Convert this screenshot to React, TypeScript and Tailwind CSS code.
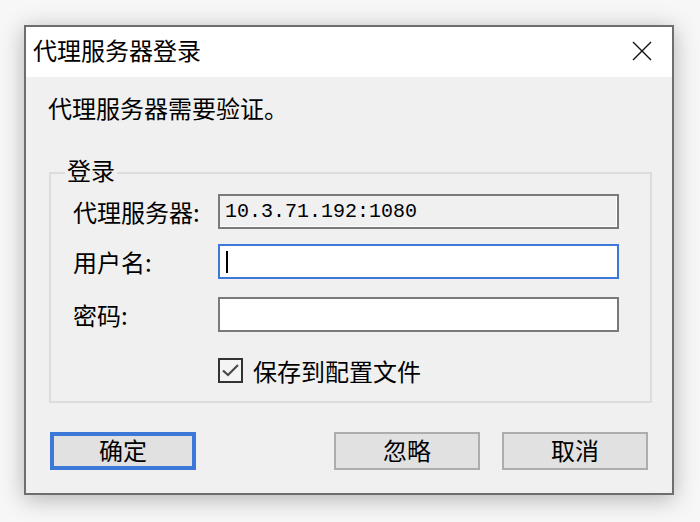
import React from "react";

const cjk = "font-['Noto_Sans_CJK_SC','Noto_Sans',sans-serif]";

function Field({
  label,
  value,
  focused = false,
  readOnly = false,
  caret = false,
}: {
  label: string;
  value?: string;
  focused?: boolean;
  readOnly?: boolean;
  caret?: boolean;
}) {
  return (
    <div className="flex h-[35px] items-center">
      <div className="w-[167px] pl-[22px] text-[24px] leading-none">{label}</div>
      <div
        className={
          "flex h-[35px] w-[401px] items-center border-2 pl-[5px] " +
          (focused
            ? "border-[#3c78d8] bg-white"
            : readOnly
            ? "border-[#7a7a7a] bg-[#f0f0f0] shadow-[inset_-1px_-1px_0_#ffffff]"
            : "border-[#7a7a7a] bg-white")
        }
      >
        {value && (
          <span className="font-['Liberation_Mono',monospace] text-[20px] leading-none text-black">
            {value}
          </span>
        )}
        {caret && <span className="ml-[1px] h-[22px] w-[2px] bg-black" />}
      </div>
    </div>
  );
}

function Button({ label, primary = false }: { label: string; primary?: boolean }) {
  return (
    <button
      className={
        "flex h-[38px] w-[146px] items-center justify-center bg-[#e1e1e1] pb-[3px] text-[24px] leading-none text-black " +
        (primary ? "border-[4px] border-[#3c78d8]" : "border-2 border-[#adadad]")
      }
    >
      {label}
    </button>
  );
}

export default function App() {
  return (
    <div className={"h-[522px] w-[700px] overflow-hidden bg-[#f7f7f7] pl-[24px] pt-[25px] " + cjk}>
      <div className="flex h-[470px] w-[650px] flex-col border-2 border-[#6e6e6e] bg-[#f0f0f0] text-black shadow-[0_4px_22px_rgba(0,0,0,0.28)]">
        {/* title bar */}
        <div className="flex h-[50px] items-center justify-between bg-white pl-[7px] pr-[20px]">
          <span className="mt-[-5px] text-[24px] leading-none">代理服务器登录</span>
          <svg width="20" height="20" viewBox="0 0 20 20" className="mt-[-2px]">
            <path d="M1 1 L19 19 M19 1 L1 19" stroke="#111" strokeWidth="1.4" fill="none" />
          </svg>
        </div>

        <div className="flex flex-1 flex-col px-[22px] pt-[19px]">
          <div className="text-[24px] leading-[24px]">代理服务器需要验证。</div>

          {/* group box */}
          <div className="relative ml-[1px] mt-[52px] h-[231px] w-[603px] border-2 border-[#dcdcdc]">
            <span className="absolute left-[14px] top-[-16px] bg-[#f0f0f0] px-[2px] text-[24px] leading-[24px]">
              登录
            </span>
            <div className="mt-[20px] flex flex-col">
              <Field label="代理服务器:" value="10.3.71.192:1080" readOnly />
              <div className="mt-[15px]">
                <Field label="用户名:" focused caret />
              </div>
              <div className="mt-[18px]">
                <Field label="密码:" />
              </div>
              <div className="mt-[26px] flex items-center pl-[167px]">
                <div className="flex h-[25px] w-[25px] items-center justify-center border-2 border-[#333] bg-[#f4f4f4]">
                  <svg width="21" height="21" viewBox="0 0 21 21">
                    <path d="M3 10.5 L8 15 L18 5" stroke="#4a4a4a" strokeWidth="2.2" fill="none" />
                  </svg>
                </div>
                <span className="ml-[10px] text-[24px] leading-none">保存到配置文件</span>
              </div>
            </div>
          </div>

          {/* buttons */}
          <div className="ml-[2px] mt-[29px] flex items-center">
            <Button label="确定" primary />
            <div className="ml-[138px]">
              <Button label="忽略" />
            </div>
            <div className="ml-[22px]">
              <Button label="取消" />
            </div>
          </div>
        </div>
      </div>
    </div>
  );
}
